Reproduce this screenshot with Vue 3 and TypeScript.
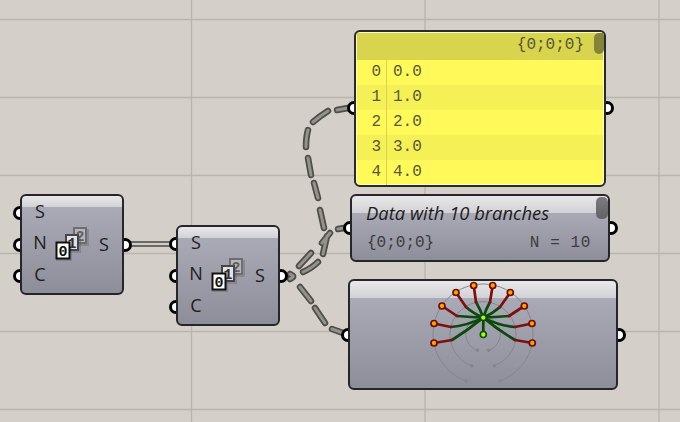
<script setup lang="ts">
const gridY: number[] = [19.5, 97.5, 175.5, 253.5, 331.5, 409.5]
const gridX: number[] = [191.5, 425, 659]
const rows = [0, 1, 2, 3, 4].map((i) => ({ index: i, value: i.toFixed(1) }))

const panelDashes =
  'M303 272Q312 268 318 262 M323 254L327 236 M324 228L320 210 M318 198L314 183 M311 175L308 158 M306 147Q306 137 308 130 M313 122Q320 116 328 111 M337 110L348 108'
const dataDashes = 'M299 266L311 253 M322 243L330 233 M338 229L344 228'
const graphDashes = 'M300 287L311 301 M315 308L325 323 M332 329L343 333'
const blob = 'M290 274L293 276 M290 279L293 277'
const allDashes = `${panelDashes} ${dataDashes} ${graphDashes} ${blob}`

const tips: [number, number, number, number, number, number][] = [
  [434, 343, 452, 340, 468, 330],
  [434, 323.5, 451, 327, 466, 326],
  [442, 306, 457, 316, 472, 317],
  [456, 292.5, 466, 307, 474, 314],
  [473.7, 285.5, 476, 302, 480, 309],
  [492.7, 285.5, 490, 302, 486, 309],
  [510.3, 292.5, 500, 307, 492, 314],
  [524.3, 306, 509, 316, 494, 317],
  [532, 323.5, 515, 327, 500, 326],
  [532.3, 343, 515, 340, 498, 330],
]
const cx = 483.3
const cy = 317.6
</script>

<template>
  <div class="canvas">
    <svg class="layer" width="680" height="422" viewBox="0 0 680 422">
      <line v-for="y in gridY" :key="'h' + y" x1="0" x2="680" :y1="y" :y2="y" class="grid" />
      <line v-for="x in gridX" :key="'v' + x" y1="0" y2="422" :x1="x" :x2="x" class="grid" />
      <path d="M128 244L176 244" class="wire-solid-outer" />
      <path d="M128 244L176 244" class="wire-solid-inner" />
      <path :d="allDashes" class="dash-outer" />
      <path :d="allDashes" class="dash-inner" />
    </svg>

    <!-- Number slider series node -->
    <div v-for="n in ['one', 'two']" :key="n" class="node series" :class="n">
      <span class="port in p1"></span>
      <span class="port in p2"></span>
      <span class="port in p3"></span>
      <span class="port out mid"></span>
      <div class="body series-body">
        <div class="labels">
          <span>S</span>
          <span>N</span>
          <span>C</span>
        </div>
        <svg class="series-icon" width="34" height="34" viewBox="0 0 34 34">
          <rect x="19" y="2" width="15" height="17" class="shade" />
          <rect x="19" y="1" width="12" height="15" fill="#b6b6ba" stroke="#6e6e72" stroke-width="2" />
          <text x="25" y="14" fill="#626266" class="digit">2</text>
          <rect x="11" y="9" width="15" height="17" class="shade" />
          <rect x="11" y="8" width="12" height="15" fill="#e2e2e4" stroke="#46464a" stroke-width="2" />
          <text x="17" y="21" fill="#303034" class="digit">1</text>
          <rect x="1" y="17" width="16" height="17" class="shade" />
          <rect x="1.5" y="15.5" width="13" height="16" fill="#ffffff" stroke="#111" stroke-width="2" />
          <text x="8" y="28.5" fill="#111" class="digit">0</text>
        </svg>
        <span class="out-label">S</span>
      </div>
    </div>

    <!-- Panel -->
    <div class="node panel">
      <span class="port in mid"></span>
      <span class="port out mid"></span>
      <div class="body panel-body">
        <div class="panel-head">
          <span class="panel-index"></span>
          <span class="panel-path">{0;0;0}</span>
          <span class="panel-scroll"></span>
        </div>
        <div v-for="r in rows" :key="r.index" class="panel-row">
          <span class="panel-index">{{ r.index }}</span>
          <span class="panel-value">{{ r.value }}</span>
        </div>
      </div>
    </div>

    <!-- Data viewer -->
    <div class="node data">
      <span class="port in mid"></span>
      <span class="port out mid"></span>
      <div class="body data-body">
        <div class="data-title">Data with 10 branches</div>
        <div class="data-foot">
          <span>{0;0;0}</span>
          <span class="data-count">N = 10</span>
        </div>
        <span class="data-scroll"></span>
      </div>
    </div>

    <!-- Param viewer -->
    <div class="node graph">
      <span class="port in mid"></span>
      <span class="port out mid"></span>
      <div class="body graph-body">
        <svg class="tree" width="110" height="111" viewBox="428 279 110 111">
          <g fill="none" stroke="#85858d" stroke-width="1">
            <path d="M466 381A50 50 0 1 1 500 381" />
            <path d="M471.7 365.7A33 33 0 1 1 494.3 365.7" />
            <path d="M477.3 350.3A17.3 17.3 0 1 1 488.7 350.3" />
          </g>
          <g fill="#85858d">
            <circle cx="466" cy="381" r="1.8" />
            <circle cx="500" cy="381" r="1.8" />
            <circle cx="471.7" cy="365.7" r="1.8" />
            <circle cx="494.3" cy="365.7" r="1.8" />
            <circle cx="477.3" cy="350.3" r="1.8" />
            <circle cx="488.7" cy="350.3" r="1.8" />
          </g>
          <g fill="none" stroke-width="2.7" stroke-linecap="round">
            <path
              v-for="(t, i) in tips"
              :key="'g' + i"
              :d="`M${cx} ${cy}Q${t[4]} ${t[5]} ${t[2]} ${t[3]}`"
              stroke="#0b4a0c"
            />
            <path
              v-for="(t, i) in tips"
              :key="'r' + i"
              :d="`M${t[2]} ${t[3]}L${t[0]} ${t[1]}`"
              stroke="#7c1010"
            />
            <path :d="`M${cx} ${cy}L${cx} 334.5`" stroke="#0b4a0c" />
          </g>
          <circle
            v-for="(t, i) in tips"
            :key="'n' + i"
            :cx="t[0]"
            :cy="t[1]"
            r="3"
            fill="#ffa200"
            stroke="#6e0c0c"
            stroke-width="1.7"
          />
          <circle :cx="cx" :cy="cy" r="3" fill="#a6f52a" stroke="#0b4a0c" stroke-width="1.6" />
          <circle :cx="cx" cy="334.5" r="3" fill="#a6f52a" stroke="#0b4a0c" stroke-width="1.6" />
        </svg>
      </div>
    </div>
  </div>
</template>

<style>
html,
body {
  margin: 0;
  background: #d4d0c9;
}
</style>

<style scoped>
.canvas {
  position: relative;
  width: 680px;
  height: 422px;
  overflow: hidden;
  background: #d4d0c9;
  font-family: "Open Sans", "Noto Sans", sans-serif;
}
.layer {
  position: absolute;
  left: 0;
  top: 0;
}
.grid {
  stroke: #b9b5ae;
  stroke-width: 1.4;
}
.wire-solid-outer {
  stroke: #6a6864;
  stroke-width: 6;
  fill: none;
}
.wire-solid-inner {
  stroke: #cfcecb;
  stroke-width: 2;
  fill: none;
}
.dash-outer {
  stroke: #4f4d4a;
  stroke-width: 6.5;
  stroke-linecap: round;
  fill: none;
}
.dash-inner {
  stroke: #94928c;
  stroke-width: 3;
  stroke-linecap: round;
  fill: none;
}

.node {
  position: absolute;
}
.node.one {
  left: 20px;
  top: 194px;
  width: 104px;
  height: 101px;
}
.node.two {
  left: 176px;
  top: 225px;
  width: 104px;
  height: 101px;
}
.node.panel {
  left: 354px;
  top: 30px;
  width: 252px;
  height: 157px;
}
.node.data {
  left: 350px;
  top: 194px;
  width: 260px;
  height: 68px;
}
.node.graph {
  left: 348px;
  top: 279px;
  width: 270px;
  height: 111px;
}

.port {
  position: absolute;
  box-sizing: border-box;
  width: 14px;
  height: 14px;
  border: 3px solid #000;
  border-radius: 50%;
  background: #fff;
}
.port.in {
  left: -7px;
}
.port.out {
  right: -8px;
}
.port.p1 {
  top: 12px;
}
.port.p2 {
  top: 44px;
}
.port.p3 {
  top: 75px;
}
.port.out.mid,
.port.in.mid {
  top: calc(50% - 7px);
}
.panel .port.in.mid {
  top: 71px;
}
.panel .port.out.mid {
  top: 71px;
}

.body {
  position: relative;
  box-sizing: border-box;
  width: 100%;
  height: 100%;
  border: 2px solid #26262a;
  border-radius: 6px;
  color: #1c1c1c;
  overflow: hidden;
}

.series-body {
  display: flex;
  align-items: center;
  background: linear-gradient(#e8e8ea 0, #d2d2d6 11px, #aaaab6 11px, #8e8e9a 100%);
  padding-left: 3px;
}
.labels {
  display: flex;
  flex-direction: column;
  align-items: center;
  width: 30px;
  margin-top: -3px;
  font-size: 18px;
  line-height: 31.5px;
}
.series-icon {
  margin-top: -2px;
}
.digit {
  font-family: "Liberation Mono", monospace;
  font-size: 15px;
  font-weight: 700;
  text-anchor: middle;
}
.shade {
  fill: rgba(60, 60, 70, 0.22);
}
.out-label {
  margin-left: 10px;
  font-size: 18px;
  line-height: 1;
  margin-top: -2px;
}

.panel-body {
  display: flex;
  flex-direction: column;
  background: #fffa5a;
  border-color: #2a2a2a;
  box-shadow: inset 0 0 0 1px #fdfbc4;
  padding: 1px 1px 0;
  font-family: "Liberation Mono", monospace;
  font-size: 16px;
}
.panel-head {
  display: flex;
  align-items: center;
  flex: 0 0 27px;
  background: #d8d44e;
  position: relative;
  color: #555538;
}
.panel-path {
  position: absolute;
  right: 19px;
  top: 3px;
}
.panel-scroll {
  position: absolute;
  right: -1px;
  top: 0;
  width: 10.5px;
  height: 21px;
  border-radius: 5px 0 5px 5px;
  background: #85823a;
}
.panel-row {
  display: flex;
  flex: 0 0 25px;
  color: #58583a;
}
.panel-row:nth-child(odd) {
  background: #f5f055;
}
.panel-index {
  box-sizing: border-box;
  flex: 0 0 30px;
  line-height: 24px;
  text-align: right;
  padding-right: 5px;
  border-right: 1.5px solid #d8d44e;
}
.panel-value {
  margin-left: 6px;
  line-height: 24px;
}

.data-body {
  background: linear-gradient(#e8e8ea 0, #d2d2d6 17px, #aaaab6 17px, #8e8e9a 100%);
}
.data-title {
  padding: 5px 0 0 14px;
  font-size: 18.4px;
  font-style: italic;
  line-height: 23px;
  color: #1c1c1c;
}
.data-foot {
  display: flex;
  justify-content: space-between;
  padding: 9px 17px 0 15px;
  font-family: "Liberation Mono", monospace;
  font-size: 16px;
  line-height: 20px;
  color: #3c3c40;
}
.data-count {
  letter-spacing: 0.6px;
}
.data-scroll {
  position: absolute;
  right: 0;
  top: 1px;
  width: 12px;
  height: 22px;
  border-radius: 5px;
  background: linear-gradient(#7c7c80, #626266);
}

.graph-body {
  display: flex;
  justify-content: center;
  background: linear-gradient(#e8e8ea 0, #d2d2d6 17px, #aaaab6 17px, #8e8e9a 100%);
}
.tree {
  margin-top: -2px;
}
</style>
